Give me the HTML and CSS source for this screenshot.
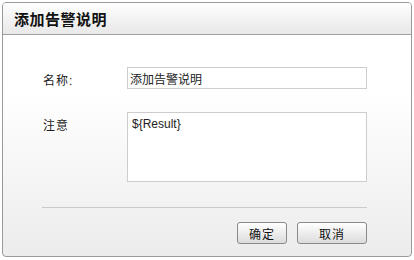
FILE: index.html
```html
<!DOCTYPE html>
<html lang="zh-CN">
<head>
    <meta charset="UTF-8">
    <title>添加告警说明</title>
    <link rel="stylesheet" href="styles.css">
</head>
<body>
    <div class="dialog">
        <div class="dialog-header">
            <h1>添加告警说明</h1>
        </div>
        <div class="dialog-body">
            <div class="form-row">
                <label class="form-label">名称:</label>
                <input type="text" class="input-field" value="添加告警说明">
            </div>
            <div class="form-row">
                <label class="form-label">注意</label>
                <textarea class="text-field">${Result}</textarea>
            </div>
            <div class="divider"></div>
            <div class="actions">
                <button class="button button-ok">确定</button>
                <button class="button button-cancel">取消</button>
            </div>
        </div>
    </div>
</body>
</html>
```

FILE: styles.css
```css
* { margin: 0; padding: 0; box-sizing: border-box; }
body {
    font-family: 'Liberation Sans', 'Noto Sans CJK SC', sans-serif;
    font-size: 12px; color: #222; background: #fff;
}
.dialog {
    margin: 2px 0 0 2px; width: 410px; height: 255px;
    border: 1px solid #9a9a9a; border-radius: 4px;
    display: flex; flex-direction: column; overflow: hidden;
    background: linear-gradient(#fff 0%, #fff 35%, #ececec 100%);
}
.dialog-header {
    height: 32px; padding-left: 11px;
    display: flex; align-items: center;
    border-bottom: 1px solid #a0a0a0;
    background: linear-gradient(#fefefe, #e8e8e8);
}
.dialog-header h1 {
    font-size: 15px; font-weight: bold; color: #111; letter-spacing: 0.5px;
}
.dialog-body { padding: 32px 44px 0 40px; display: flex; flex-direction: column; }
.form-row { display: flex; align-items: flex-start; margin-bottom: 23px; }
.form-label { width: 84px; padding-top: 4px; font-size: 12px; letter-spacing: 1px; }
.input-field {
    width: 240px; height: 22px; border: 1px solid #cdcdcd;
    padding: 0 2px; font: inherit; color: #222; background: #fff;
}
.text-field {
    width: 240px; height: 70px; border: 1px solid #cdcdcd;
    padding: 4px 4px; font: inherit; color: #222; background: #fff;
    resize: none; outline: none;
}
.form-row:nth-child(2) { margin-bottom: 25px; }
.divider { height: 1px; background: #cacaca; margin-left: -1px; }
.actions { display: flex; justify-content: flex-end; gap: 10px; padding-top: 14px; }
.button {
    height: 22px; border: 1px solid #8a8a8a; border-radius: 3px;
    background: linear-gradient(#fff, #dcdcdc);
    font: inherit; color: #111; letter-spacing: 1px; cursor: pointer;
}
.button-ok { width: 50px; }
.button-cancel { width: 70px; }
```
